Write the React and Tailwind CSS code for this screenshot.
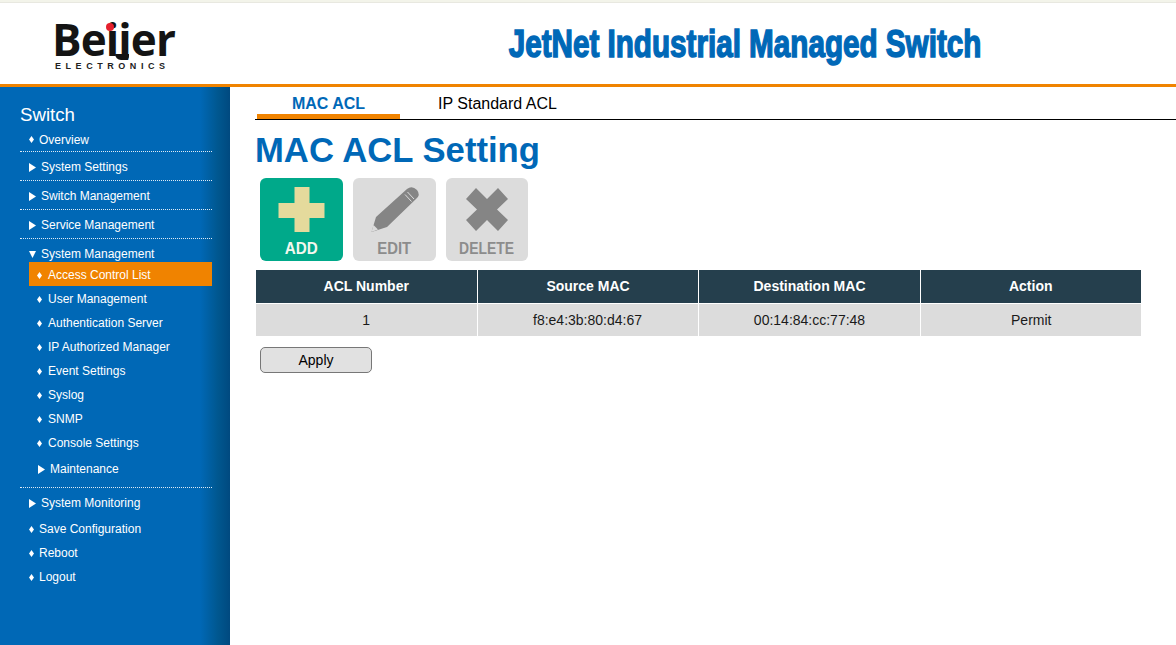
const font = "[font-family:'Liberation_Sans',Arial,sans-serif]";

function Bullet() {
  return (
    <svg width="5" height="7" viewBox="0 0 5 7" className="shrink-0">
      <path d="M2.5 0 L5 3.5 L2.5 7 L0 3.5 Z" fill="#fff" />
    </svg>
  );
}
function Right() {
  return (
    <svg width="7" height="9" viewBox="0 0 7 9" className="shrink-0">
      <path d="M0 0 L7 4.5 L0 9 Z" fill="#fff" />
    </svg>
  );
}
function Down() {
  return (
    <svg width="7" height="7" viewBox="0 0 7 7" className="shrink-0">
      <path d="M0 0 L7 0 L3.5 7 Z" fill="#fff" />
    </svg>
  );
}
function Sep() {
  return <div className="border-t border-dotted border-[#dfeaf5] ml-5 w-[192px]" />;
}
function Leaf({ label, active }) {
  return (
    <div className={`h-6 pt-[2px] ml-[29px] w-[183px] flex items-center gap-[6px] pl-2 ${active ? "bg-[#f08300]" : ""}`}>
      <Bullet />
      <span>{label}</span>
    </div>
  );
}
function Top({ label, h, open, nudge }) {
  return (
    <div className={`${h} ${nudge ? "pt-[2px]" : ""} ml-[29px] flex items-center gap-[5px]`}>
      {open ? <Down /> : <Right />}
      <span>{label}</span>
    </div>
  );
}
function TopLeaf({ label, h = "h-6", nudge }) {
  return (
    <div className={`${h} ${nudge ? "pt-[2px]" : ""} ml-[29px] flex items-center gap-[5px]`}>
      <Bullet />
      <span>{label}</span>
    </div>
  );
}

function ActionButton({ label, bg, text, scale, children, w = "w-[83px]" }) {
  return (
    <div className={`${w} h-[83px] rounded-[6px] ${bg} flex flex-col items-center relative`}>
      <svg width="60" height="50" viewBox="0 0 60 50" className="mt-[7px]">{children}</svg>
      <span className={`absolute top-[61px] text-[16px] leading-5 font-bold ${scale} ${text}`}>{label}</span>
    </div>
  );
}

export default function App() {
  return (
    <div className={`${font} w-[1176px] h-[645px] overflow-hidden bg-white flex flex-col`}>
      <div className="h-[3px] bg-[#f3f4ea] shrink-0 border-b border-[#e8e8e0]" />
      <header className="h-[81px] shrink-0 flex">
        <div className="w-[230px] relative">
          <div className="absolute left-[52px] top-[11px] h-[46px] w-[130px] overflow-hidden text-[44px] leading-[50px] font-bold text-[#141414] [font-family:'Open_Sans',sans-serif] tracking-[-0.9px] whitespace-nowrap">Beijer</div>
          <span className="absolute left-[115px] top-[51px] w-[14px] h-[6px] bg-[#141414] rounded-bl-[6px] rounded-br-[4px]" />
          <span className="absolute left-[106px] top-[20px] w-[8px] h-[8px] rounded-full bg-[#e5202e]" />
          <div className="absolute left-[55px] top-[58px] text-[9px] leading-[10px] font-bold text-[#222] tracking-[4.55px] whitespace-nowrap">ELECTRONICS</div>
        </div>
        <div className="flex-1 flex justify-center items-center pl-[84px]">
          <div className="text-[38px] leading-[44px] font-bold text-[#0068b7] whitespace-nowrap scale-x-[0.78] [-webkit-text-stroke:1.5px_#0068b7]">JetNet Industrial Managed Switch</div>
        </div>
      </header>
      <div className="h-[3px] bg-[#f08300] shrink-0" />
      <div className="flex flex-1 min-h-0">
        <aside className="w-[230px] shrink-0 bg-[linear-gradient(to_right,#0068b6_0,#0068b6_200px,#00578f_218px,#00497f_100%)] text-white text-[12px] pt-[17px]">
          <div className="ml-5 text-[18.67px] leading-[22px]">Switch</div>
          <TopLeaf label="Overview" h="h-[25px]" nudge />
          <Sep />
          <Top label="System Settings" h="h-7" nudge />
          <Sep />
          <Top label="Switch Management" h="h-7" nudge />
          <Sep />
          <Top label="Service Management" h="h-7" nudge />
          <Sep />
          <div className="pt-[5px]"><Top label="System Management" h="h-[18px]" open nudge /></div>
          <Leaf label="Access Control List" active />
          <Leaf label="User Management" />
          <Leaf label="Authentication Server" />
          <Leaf label="IP Authorized Manager" />
          <Leaf label="Event Settings" />
          <Leaf label="Syslog" />
          <Leaf label="SNMP" />
          <Leaf label="Console Settings" />
          <div className="h-[29px] pt-[1px] ml-[38px] flex items-center gap-[5px]"><Right /><span>Maintenance</span></div>
          <div className="pt-[4px]"><Sep /></div>
          <Top label="System Monitoring" h="h-[30px]" />
          <TopLeaf label="Save Configuration" h="h-[22px]" />
          <TopLeaf label="Reboot" h="h-[26px]" />
          <TopLeaf label="Logout" h="h-[22px]" />
        </aside>
        <main className="flex-1 pl-[25px] pt-[2px] relative">
          <div className="flex h-[31px] border-b border-black items-stretch">
            <div className="ml-[2px] w-[143px] border-b-[5px] border-[#f08300] flex justify-center text-[16px] font-bold text-[#0068b7] leading-[30px]">MAC ACL</div>
            <div className="ml-[38px] text-[16px] text-black leading-[30px]">IP Standard ACL</div>
          </div>
          <h1 className="text-[34.67px] leading-[42px] font-bold text-[#0068b7] mt-[9px]">MAC ACL Setting</h1>
          <div className="flex gap-[10px] ml-[5px] mt-[7px]">
            <ActionButton label="ADD" bg="bg-[#00a98a]" text="text-[#f4f7ee]" scale="scale-x-[0.95]">
              <path d="M22.5 2 H37.5 V18 H52.5 V33 H37.5 V47 H22.5 V33 H6.5 V18 H22.5 Z" fill="#e5da9c" />
            </ActionButton>
            <ActionButton label="EDIT" bg="bg-[#dcdcdc]" text="text-[#8c8c8c]" scale="scale-x-[0.93]">
              <path d="M6.5 47 L11 32 L42 4 Q47 0 52 5 Q56 10 51 14 L22 42 Z" fill="#858585" />
              <path d="M42.5 7 L49 14 M40 9.5 L46.5 16.5" stroke="#dcdcdc" strokeWidth="1" />
              <path d="M6.5 47 L8.5 40 L13 44.5 Z" fill="#dcdcdc" />
            </ActionButton>
            <ActionButton label="DELETE" bg="bg-[#dcdcdc]" text="text-[#8c8c8c]" scale="scale-x-[0.87]" w="w-[82px]">
              <path d="M19 3 L30 14 L41 3 L51 14 L40 24.5 L51 35 L41 46 L30 35 L19 46 L9 35 L20 24.5 L9 14 Z" fill="#858585" />
            </ActionButton>
          </div>
          <table className="mt-[9px] ml-[1px] w-[885px] table-fixed border-collapse text-[14px] text-center">
            <thead>
              <tr className="h-[33px] bg-[#253f4d] text-white font-bold">
                <th className="w-[221px] border-r border-b border-white">ACL Number</th>
                <th className="w-[221px] pl-[1px] border-r border-b border-white">Source MAC</th>
                <th className="w-[222px] pl-[1px] border-r border-b border-white">Destination MAC</th>
                <th className="border-b border-white">Action</th>
              </tr>
            </thead>
            <tbody>
              <tr className="h-[33px] bg-[#dcdcdc] text-[#1a1a1a]">
                <td className="border-r border-white pt-[1px]">1</td>
                <td className="border-r border-white pt-[1px]">f8:e4:3b:80:d4:67</td>
                <td className="border-r border-white pt-[1px] pl-[1px]">00:14:84:cc:77:48</td>
                <td className="pt-[1px] pl-[1px]">Permit</td>
              </tr>
            </tbody>
          </table>
          <button className="block ml-[5px] mt-[11px] w-[112px] h-[26px] rounded-[5px] border border-[#777] bg-[#e1e1e1] text-[14px] text-black">Apply</button>
        </main>
      </div>
    </div>
  );
}
